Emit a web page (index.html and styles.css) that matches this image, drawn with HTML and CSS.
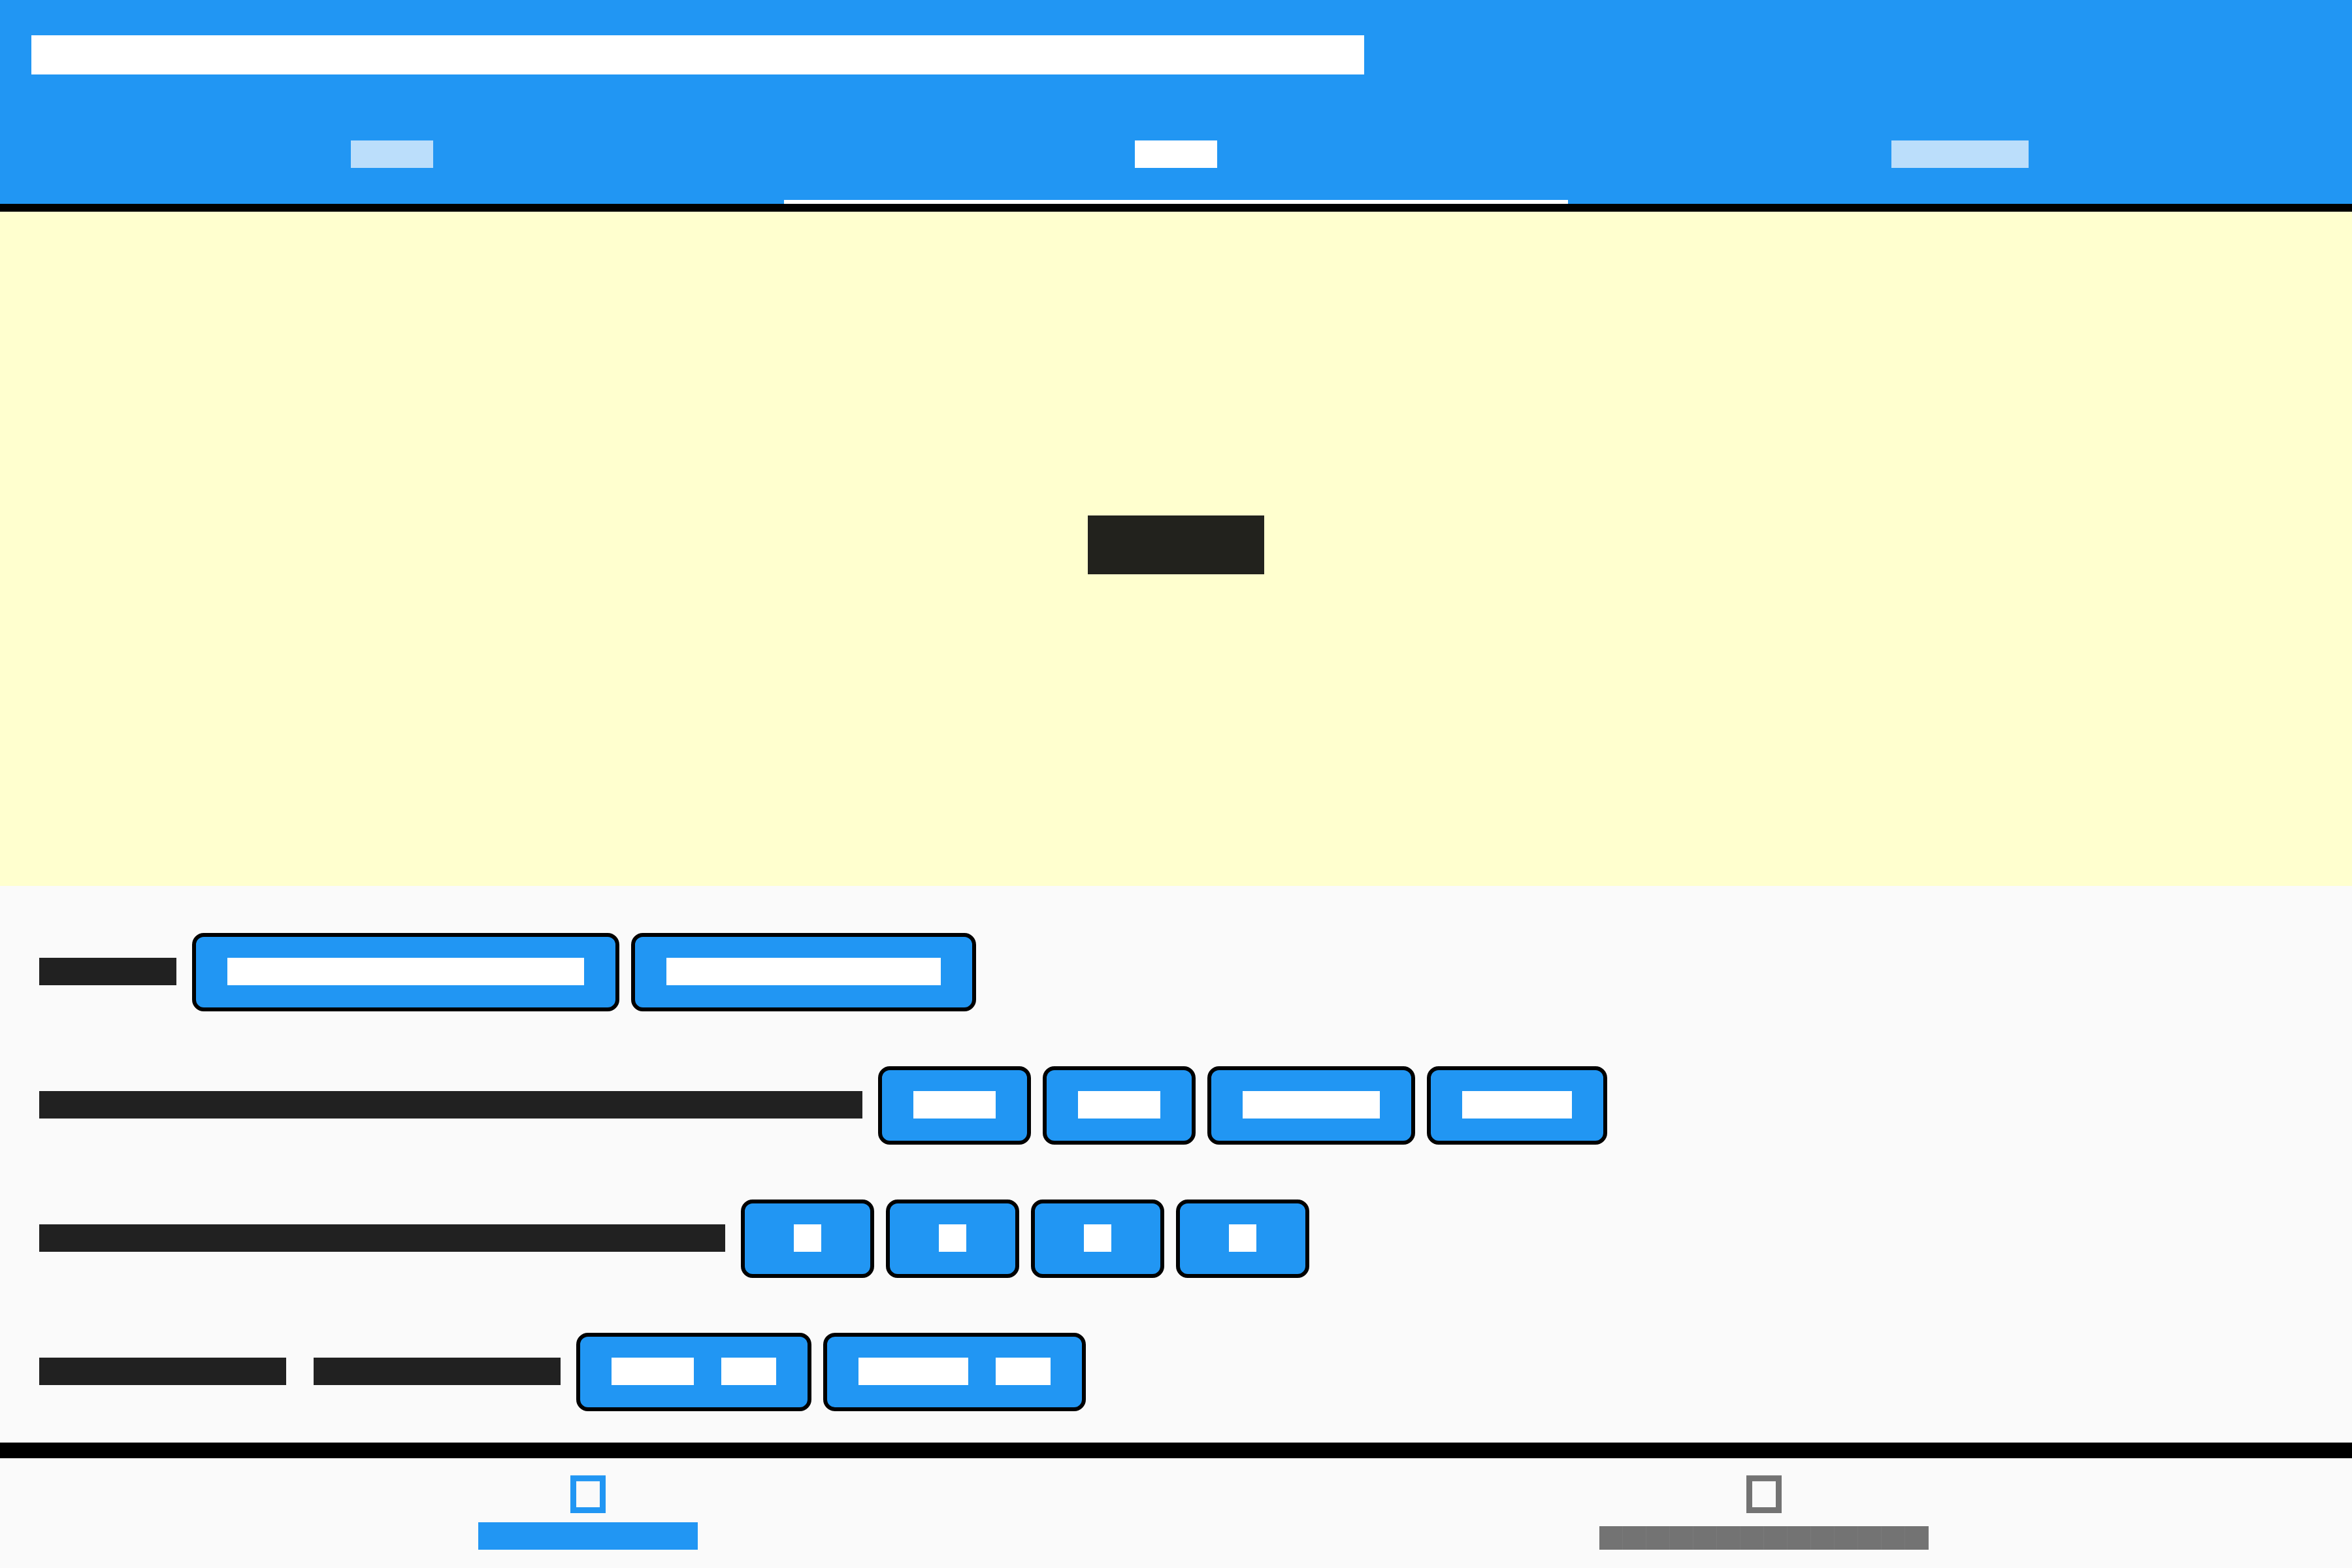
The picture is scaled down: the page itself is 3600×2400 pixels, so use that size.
FILE: index.html
```
<!DOCTYPE html>
<html lang="en">
<head>
<meta charset="utf-8">
<title>Tabs</title>
<link rel="stylesheet" href="styles.css">
</head>
<body>
<header class="app-bar">
  <h1 class="title"><span class="bar c34"></span></h1>
  <nav class="tabs">
    <button class="tab"><span class="bar c3"></span></button>
    <button class="tab selected"><span class="bar c3"></span></button>
    <button class="tab"><span class="bar c5"></span></button>
  </nav>
</header>
<main class="content">
  <section class="view"><span class="bar c3"></span></section>
  <section class="panel">
    <div class="row">
      <span class="label"><span class="bar c5"></span></span>
      <button class="btn"><span class="bar c13"></span></button>
      <button class="btn"><span class="bar c10"></span></button>
    </div>
    <div class="row">
      <span class="label"><span class="bar c30"></span></span>
      <button class="btn"><span class="bar c3"></span></button>
      <button class="btn"><span class="bar c3"></span></button>
      <button class="btn"><span class="bar c5"></span></button>
      <button class="btn"><span class="bar c4"></span></button>
    </div>
    <div class="row">
      <span class="label"><span class="bar c25"></span></span>
      <button class="btn"><span class="bar c1"></span></button>
      <button class="btn"><span class="bar c1"></span></button>
      <button class="btn"><span class="bar c1"></span></button>
      <button class="btn"><span class="bar c1"></span></button>
    </div>
    <div class="row">
      <span class="label"><span class="bar c9"></span><span class="bar c9"></span></span>
      <button class="btn"><span class="bar c3"></span><span class="bar c2"></span></button>
      <button class="btn"><span class="bar c4"></span><span class="bar c2"></span></button>
    </div>
  </section>
</main>
<nav class="bottom-nav">
  <button class="nav-item selected">
    <svg class="icon" viewBox="0 0 54 58"><path fill="currentColor" fill-rule="evenodd" d="M0 .3H54V58H0ZM9 9.3V49H45V9.3Z"/></svg>
    <span class="bar c8"></span>
  </button>
  <button class="nav-item">
    <svg class="icon" viewBox="0 0 54 58"><path fill="currentColor" fill-rule="evenodd" d="M0 .3H54V58H0ZM9 9.3V49H45V9.3Z"/></svg>
    <span class="bar c14"></span>
  </button>
</nav>
</body>
</html>
```
FILE: styles.css
```
* {
  box-sizing: border-box;
}

body {
  margin: 0;
  min-height: 100vh;
  display: flex;
  flex-direction: column;
  background: #fafafa;
  color: #212121;
  font-family: Roboto, sans-serif;
  font-size: 42px;
}

button {
  margin: 0;
  border: 0;
  padding: 0;
  background: none;
  color: inherit;
  font: inherit;
}

/* A block of solid text: one em per character */
.bar {
  flex: none;
  display: block;
  height: 1em;
  background: currentColor;
}

.c1 { width: 1em; }
.c2 { width: 2em; }
.c3 { width: 3em; }
.c4 { width: 4em; }
.c5 { width: 5em; }
.c8 { width: 8em; }
.c9 { width: 9em; }
.c10 { width: 10em; }
.c13 { width: 13em; }
.c14 { width: 14em; }
.c25 { width: 25em; }
.c30 { width: 30em; }
.c34 { width: 34em; }

.app-bar {
  background: #2196f3;
  border-bottom: 12px solid #000;
  color: #fff;
}

.title {
  margin: 0;
  padding: 54px 48px;
  font-size: 60px;
}

.tabs {
  display: grid;
  grid-template-columns: repeat(3, 1fr);
}

.tab {
  display: flex;
  justify-content: center;
  height: 144px;
  padding-top: 47px;
  border-bottom: 6px solid transparent;
  color: #bbdefb;
}

.tab.selected {
  border-color: #fff;
  color: #fff;
}

.content {
  flex: 1;
  display: flex;
  flex-direction: column;
}

.view {
  flex: 1;
  display: flex;
  align-items: center;
  justify-content: center;
  padding-bottom: 12px;
  background: #ffffcf;
  color: #22221d;
  font-size: 90px;
}

.panel {
  display: flex;
  flex-direction: column;
  gap: 84px;
  padding: 72px 60px 48px;
}

.row {
  display: flex;
  gap: 18px;
}

.label {
  display: flex;
  gap: 42px;
  padding-top: 38px;
  margin-right: 6px;
}

.btn {
  display: flex;
  justify-content: center;
  gap: 42px;
  min-width: 204px;
  height: 120px;
  padding: 32px 48px;
  border: 6px solid #000;
  border-radius: 18px;
  background: #2196f3;
  color: #fff;
}

.bottom-nav {
  display: grid;
  grid-template-columns: 1fr 1fr;
  height: 192px;
  border-top: 24px solid #000;
}

.nav-item {
  display: flex;
  flex-direction: column;
  align-items: center;
  justify-content: space-between;
  padding: 26px 0 28px;
  color: #737373;
  font-size: 36px;
}

.nav-item.selected {
  color: #2196f3;
  font-size: 42px;
}

.nav-item .c14 {
  background: repeating-linear-gradient(to right, #737373 0 35px, #797979 35px 36px);
}

.icon {
  width: 54px;
  height: 58px;
}
```
